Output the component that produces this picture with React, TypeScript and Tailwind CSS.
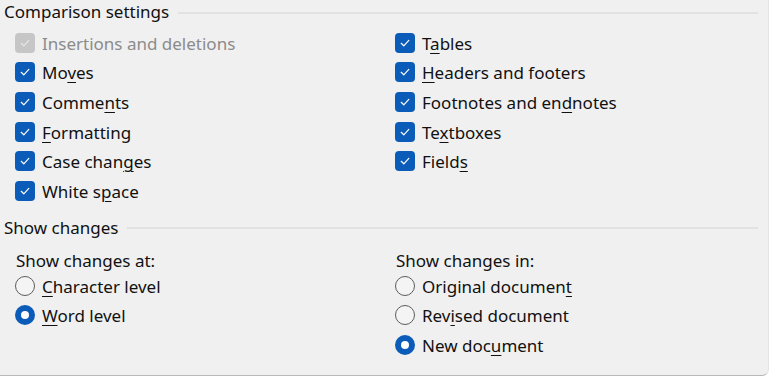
import React from "react"

const font = { fontFamily: '"Segoe UI", "Noto Sans", "Open Sans", sans-serif' }

function Label({ text, disabled }: { text: string; disabled?: boolean }) {
  const i = text.indexOf("&")
  const color = disabled ? "text-[#8b8b8b]" : "text-[#111111]"
  if (i < 0) return <span className={color}>{text}</span>
  return (
    <span className={color}>
      {text.slice(0, i)}
      <span className="underline decoration-1 underline-offset-[3px]">{text[i + 1]}</span>
      {text.slice(i + 2)}
    </span>
  )
}

function Check({ text, disabled }: { text: string; disabled?: boolean }) {
  return (
    <div className="flex h-[29.6px] items-center gap-[7px]">
      <span
        className={
          "flex h-[20px] w-[20px] shrink-0 items-center justify-center rounded-[4px] " +
          (disabled ? "bg-[#c6c6c6]" : "bg-[#0b5cb8]")
        }
      >
        <svg width="12" height="12" viewBox="0 0 12 12" fill="none">
          <path d="M2.2 6.3 L4.8 8.8 L9.8 3.4" stroke={disabled ? "#e6e6e6" : "#ffffff"} strokeWidth="1.2" strokeLinecap="round" strokeLinejoin="round" />
        </svg>
      </span>
      <span className="mt-[2px]">
        <Label text={text} disabled={disabled} />
      </span>
    </div>
  )
}

function Radio({ text, checked }: { text: string; checked?: boolean }) {
  return (
    <div className="flex h-[29.6px] items-center gap-[7px]">
      {checked ? (
        <span className="flex h-[20px] w-[20px] shrink-0 items-center justify-center rounded-full bg-[#0b5cb8]">
          <span className="h-[8px] w-[8px] rounded-full bg-white" />
        </span>
      ) : (
        <span className="h-[20px] w-[20px] shrink-0 rounded-full border border-[#5c5c5c] bg-[#f4f4f4]" />
      )}
      <span className="mt-[2px]">
        <Label text={text} />
      </span>
    </div>
  )
}

function Heading({ title }: { title: string }) {
  return (
    <div className="flex h-[22px] items-center gap-[9px] pl-[4px] pr-[10px]">
      <span className="text-[#111111]">{title}</span>
      <div className="mt-[1px] h-[2px] flex-1 bg-[#e2e2e2]" />
    </div>
  )
}

export default function App() {
  return (
    <div className="h-[378px] w-[770px] overflow-hidden bg-white" style={font}>
      <div className="h-[376px] w-[769px] rounded-br-[7px] border-b border-r border-b-[#b8b8b8] border-r-[#e4e4e4] bg-[#f0f0f0] pt-[1px] text-[17px] leading-[20px]">
        <Heading title="Comparison settings" />
        <div className="mt-[5px] grid grid-cols-[380px_1fr] pl-[15px]">
          <div>
            <Check text="Insertions and deletions" disabled />
            <Check text="Mo&ves" />
            <Check text="Comme&nts" />
            <Check text="&Formatting" />
            <Check text="Case chan&ges" />
            <Check text="White s&pace" />
          </div>
          <div>
            <Check text="T&ables" />
            <Check text="&Headers and footers" />
            <Check text="Footnotes and en&dnotes" />
            <Check text="Te&xtboxes" />
            <Check text="Field&s" />
          </div>
        </div>
        <div className="mt-[11px]">
          <Heading title="Show changes" />
        </div>
        <div className="mt-[7px] grid grid-cols-[380px_1fr] pl-[15px]">
          <div>
            <div className="flex h-[25.5px] items-center pl-[1px] pt-[5px] text-[#111111]">Show changes at:</div>
            <Radio text="&Character level" />
            <Radio text="&Word level" checked />
          </div>
          <div>
            <div className="flex h-[25.5px] items-center pl-[1px] pt-[5px] text-[#111111]">Show changes in:</div>
            <Radio text="Original documen&t" />
            <Radio text="Rev&ised document" />
            <Radio text="New doc&ument" checked />
          </div>
        </div>
      </div>
    </div>
  )
}
